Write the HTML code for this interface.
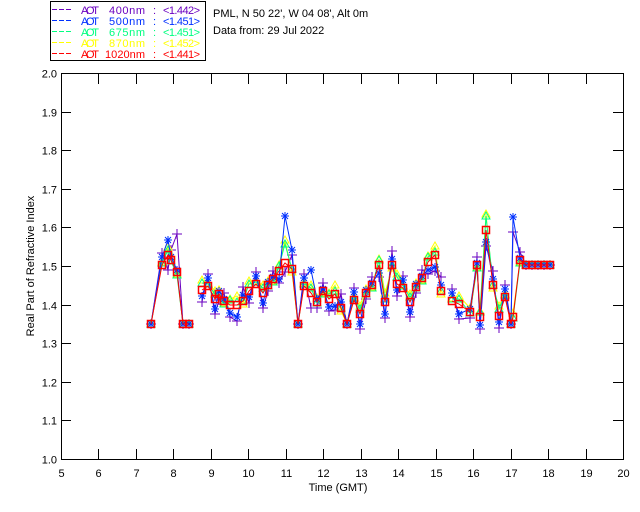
<!DOCTYPE html>
<html><head><meta charset="utf-8"><style>
html,body{margin:0;padding:0;background:#fff;width:640px;height:512px;overflow:hidden}
svg{display:block}
text{font-family:"Liberation Sans",sans-serif;font-size:11px}
</style></head><body>
<svg id="s" width="640" height="512" xmlns="http://www.w3.org/2000/svg">
<rect x="50.5" y="1.5" width="155" height="59" fill="none" stroke="#000"/>
<g id="leg"></g>
<text x="213" y="17" fill="#000">PML, N 50 22', W 04 08', Alt 0m</text>
<text x="213" y="34" fill="#000">Data from: 29 Jul 2022</text>
<g id="ax" stroke="#000" fill="none"></g>
<g id="lab"></g>
<text x="338" y="491" text-anchor="middle">Time (GMT)</text>
<text transform="translate(34,266) rotate(-90)" text-anchor="middle">Real Part of Refractive Index</text>
<g id="data"></g>
</svg>
<script>
var ns="http://www.w3.org/2000/svg";
function el(p,t,a,txt){var e=document.createElementNS(ns,t);for(var k in a)e.setAttribute(k,a[k]);if(txt)e.textContent=txt;document.getElementById(p).appendChild(e);return e;}
var L=[["#6a00c0","400nm","<1.442>",109],["#0030ff","500nm","<1.451>",109],["#00ff80","675nm","<1.451>",109],["#ffff00","870nm","<1.452>",109],["#ff0000","1020nm","<1.441>",105]];
L.forEach(function(l,i){var y=14+i*11;
 el("leg","line",{x1:52,y1:y-4.5,x2:73,y2:y-4.5,stroke:l[0],"stroke-dasharray":"5 2"});
 el("leg","text",{x:81,y:y,fill:l[0],textLength:18},"AOT");
 el("leg","text",{x:l[3],y:y,fill:l[0],textLength:145-l[3]},l[1]);
 el("leg","text",{x:153,y:y,fill:l[0]},":");
 el("leg","text",{x:163,y:y,fill:l[0],textLength:37},l[2]);});
var X0=61,X1=623,Y0=459,Y1=73;
el("ax","rect",{x:61.5,y:73.5,width:562,height:386});
for(var h=5;h<=20;h++){var x=Math.round(X0+(h-5)*(X1-X0)/15)+0.5;
 el("ax","line",{x1:x,y1:459,x2:x,y2:449});el("ax","line",{x1:x,y1:74,x2:x,y2:84});
 el("lab","text",{x:x,y:477,"text-anchor":"middle"},""+h);}
for(var i=0;i<=10;i++){var y=Math.round(Y0-i*(Y0-Y1)/10)+0.5;
 el("ax","line",{x1:61,y1:y,x2:71,y2:y});el("ax","line",{x1:623,y1:y,x2:613,y2:y});
 el("lab","text",{x:57,y:y+4,"text-anchor":"end"},(1+i/10).toFixed(1));}
var R=[[151,324],[162,265],[168,255],[171,260],[177,272],[183,324],[189,324],null,
[202,290],[208,286],[215,299],[219,294],[224,301],[230,305],[237,305],[243,301],[249,291],[256,284],[263,293],[268,285],[273,279],[279,271],[285,263],[292,269],[298,324],[304,286],[311,293],[317,302],[323,291],[329,299],[335,294],[341,308],[347,324],[354,300],[360,314],[366,293],[372,285],[379,265],[385,302],[392,265],[397,284],[403,288],[410,302],[416,287],[422,278],[428,262],[435,255],[441,291],null,
[452,301],[459,304],[470,312],[477,265],[480,317],[486,230],[493,285],[499,316],[505,297],[511,324],[513,317],[520,260],[526,265],[532,265],[538,265],[544,265],[550,265]];
var cols=["#ffff00","#00ff80","#0030ff","#6a00c0"];
var offs=[[-10,-3,-8,-4,2,-6,-9,3],[-7,-2,-5,1,3,-5,-3,0],[6,-8,10,-3,-2,8,12,-6],[12,-12,15,6,-8,12,16,-14]];
var over=[{54:214,22:240},{54:216,22:244},{22:216,23:250,59:217,2:240,26:270},{4:234,3:250,59:232,22:272}];
function series(ci){var segs=[],cur=[];R.forEach(function(p,i){if(!p){segs.push(cur);cur=[];return;}
 var dy=(p[1]>=320||p[1]==265&&p[0]>=526)?0:offs[ci][i%8];var y=p[1]+dy;if(over[ci][i]!==undefined)y=over[ci][i];cur.push([p[0],y]);});segs.push(cur);return segs;}
function draw(segs,c,mk){segs.forEach(function(s){el("data","polyline",{points:s.map(function(p){return p.join(",")}).join(" "),fill:"none",stroke:c,"stroke-width":1});
 s.forEach(function(p){var x=p[0],y=p[1];
  if(mk=="sq")el("data","rect",{x:x-3.5,y:y-3.5,width:7,height:7,fill:"none",stroke:c,"stroke-width":1.5});
  else if(mk=="star"){el("data","path",{d:"M"+(x-4)+" "+y+"h8M"+x+" "+(y-4)+"v8M"+(x-3)+" "+(y-3)+"l6 6M"+(x+3)+" "+(y-3)+"l-6 6",stroke:c,"stroke-width":1});}
  else if(mk=="plus")el("data","path",{d:"M"+(x-5)+" "+y+"h10M"+x+" "+(y-5)+"v10",stroke:c,"stroke-width":1});
  else el("data","path",{d:"M"+x+" "+(y-4)+"l4 7h-8z",fill:"none",stroke:c,"stroke-width":1});});});}
draw(series(3),cols[3],"plus");
draw(series(0),cols[0],"tri");
draw(series(1),cols[1],"tri");
draw(series(2),cols[2],"star");
var rs=[],c=[];R.forEach(function(p){if(!p){rs.push(c);c=[];}else c.push(p);});rs.push(c);
draw(rs,"#ff0000","sq");
</script>
</body></html>
